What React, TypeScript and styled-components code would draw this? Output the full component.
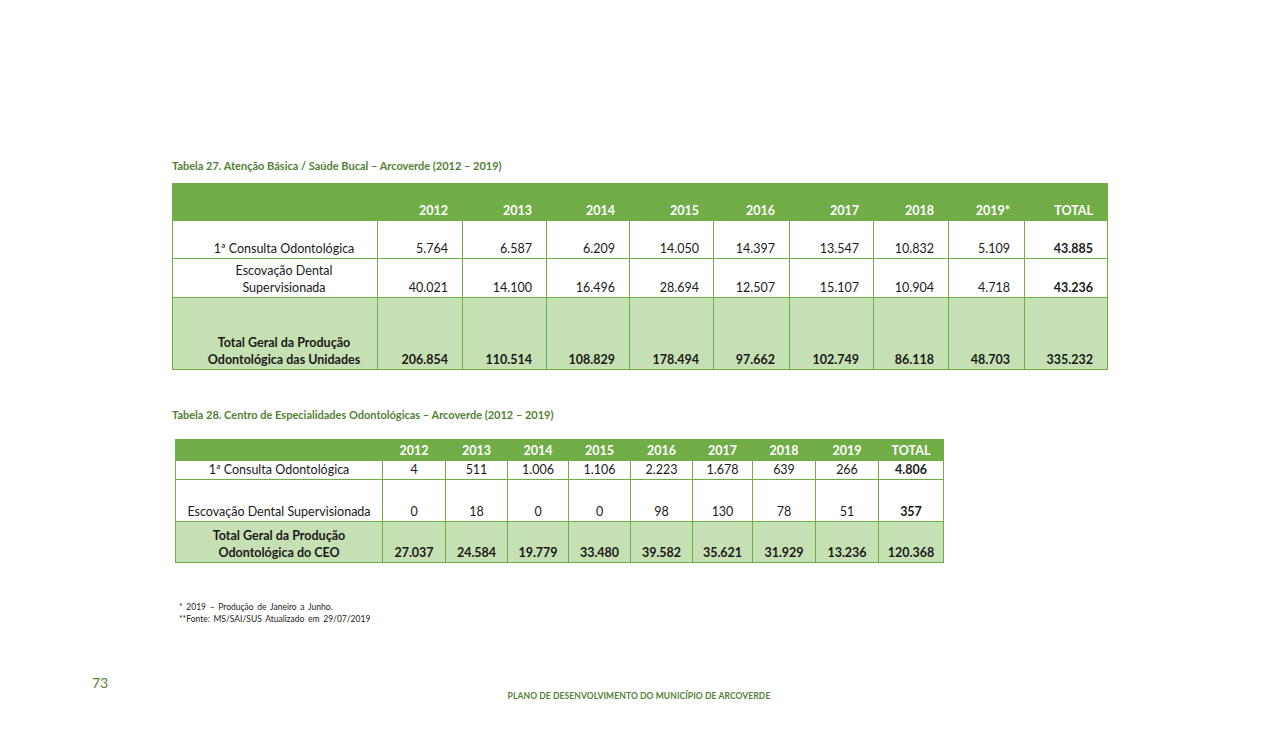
import styled, { createGlobalStyle } from "styled-components";

const GlobalStyle = createGlobalStyle`
    html, body {
        margin: 0;
        padding: 0;
        background: #ffffff;
    }

    body {
        font-family: Lato, "Open Sans", "Liberation Sans", sans-serif;
        color: #1a1a1a;
    }
`;

const Page = styled.div`
    position: relative;
    width: 1278px;
    height: 737px;
    box-sizing: border-box;
    padding: 158px 0 0 172px;
    display: flex;
    flex-direction: column;
    overflow: hidden;
`;

const Caption = styled.div<{ $gap: number }>`
    font-size: 11px;
    font-weight: 700;
    color: #538135;
    line-height: 15px;
    margin-bottom: ${(p) => p.$gap}px;
`;

const Table = styled.table<{ $offset?: number }>`
    border-collapse: collapse;
    table-layout: fixed;
    margin-left: ${(p) => p.$offset ?? 0}px;
    font-size: 12.5px;
`;

const HeadCell = styled.th<{ $align: "right" | "center"; $pad: number }>`
    background: #70ad47;
    color: #ffffff;
    font-weight: 700;
    text-align: ${(p) => p.$align};
    vertical-align: bottom;
    padding: 0 ${(p) => p.$pad}px 1px ${(p) => p.$pad}px;
    border: 1px solid #70ad47;
    line-height: 16px;
`;

const Cell = styled.td<{
    $align: "right" | "center";
    $pad: number;
    $total?: boolean;
    $bold?: boolean;
    $middle?: boolean;
}>`
    background: ${(p) => (p.$total ? "#c5e0b3" : "#ffffff")};
    font-weight: ${(p) => (p.$total || p.$bold ? 700 : 400)};
    text-align: ${(p) => p.$align};
    vertical-align: ${(p) => (p.$middle ? "middle" : "bottom")};
    padding: 0 ${(p) => p.$pad}px 1px ${(p) => p.$pad}px;
    border: 1px solid #70ad47;
    line-height: 17px;
    white-space: nowrap;
`;

const LabelCell = styled(Cell)<{ $shift?: number }>`
    text-align: center;
    white-space: normal;
    padding: 0 2px 1px ${(p) => 2 + (p.$shift ?? 0)}px;
`;

const Row = styled.tr<{ $h: number }>`
    height: ${(p) => p.$h}px;
`;

const Notes = styled.div`
    margin: 38px 0 0 7px;
    font-size: 8.5px;
    line-height: 12px;
    color: #222222;
    word-spacing: 1.5px;
`;

const PageNumber = styled.div`
    position: absolute;
    left: 92px;
    top: 674px;
    font-size: 14px;
    color: #538135;
`;

const Footer = styled.div`
    position: absolute;
    left: 0;
    right: 0;
    top: 691px;
    text-align: center;
    font-size: 8.5px;
    font-weight: 700;
    color: #538135;
    letter-spacing: 0.1px;
`;

const years1 = ["2012", "2013", "2014", "2015", "2016", "2017", "2018", "2019*"];
const widths1 = [205, 85, 84, 83, 84, 76, 84, 75, 76, 83];

const rows1 = [
    {
        label: ["1ª Consulta Odontológica"],
        values: ["5.764", "6.587", "6.209", "14.050", "14.397", "13.547", "10.832", "5.109"],
        total: "43.885",
        h: 38,
    },
    {
        label: ["Escovação Dental", "Supervisionada"],
        values: ["40.021", "14.100", "16.496", "28.694", "12.507", "15.107", "10.904", "4.718"],
        total: "43.236",
        h: 39,
    },
];

const total1 = ["206.854", "110.514", "108.829", "178.494", "97.662", "102.749", "86.118", "48.703", "335.232"];

const years2 = ["2012", "2013", "2014", "2015", "2016", "2017", "2018", "2019"];
const widths2 = [207, 63, 62, 61, 62, 62, 60, 63, 63, 65];

const total2 = ["27.037", "24.584", "19.779", "33.480", "39.582", "35.621", "31.929", "13.236", "120.368"];

const App = () => {
    return (
        <>
            <GlobalStyle />
            <Page>
                <Caption $gap={10}>
                    Tabela 27. Atenção Básica / Saúde Bucal – Arcoverde (2012 – 2019)
                </Caption>
                <Table style={{ width: 935 }}>
                    <colgroup>
                        {widths1.map((w, i) => (
                            <col key={i} style={{ width: w }} />
                        ))}
                    </colgroup>
                    <tbody>
                        <Row $h={37}>
                            <HeadCell $align="right" $pad={14} />
                            {years1.map((y) => (
                                <HeadCell key={y} $align="right" $pad={14}>
                                    {y}
                                </HeadCell>
                            ))}
                            <HeadCell $align="right" $pad={14}>
                                TOTAL
                            </HeadCell>
                        </Row>
                        {rows1.map((r) => (
                            <Row key={r.label[0]} $h={r.h}>
                                <LabelCell $align="center" $pad={2} $shift={18}>
                                    {r.label.map((line, i) => (
                                        <div key={i}>{line}</div>
                                    ))}
                                </LabelCell>
                                {r.values.map((v, i) => (
                                    <Cell key={i} $align="right" $pad={14}>
                                        {v}
                                    </Cell>
                                ))}
                                <Cell $align="right" $pad={14} $bold>
                                    {r.total}
                                </Cell>
                            </Row>
                        ))}
                        <Row $h={72}>
                            <LabelCell $align="center" $pad={2} $shift={18} $total>
                                Total Geral da Produção
                                <br />
                                Odontológica das Unidades
                            </LabelCell>
                            {total1.map((v, i) => (
                                <Cell key={i} $align="right" $pad={14} $total>
                                    {v}
                                </Cell>
                            ))}
                        </Row>
                    </tbody>
                </Table>

                <Caption $gap={17} style={{ marginTop: 37 }}>
                    Tabela 28. Centro de Especialidades Odontológicas – Arcoverde (2012 – 2019)
                </Caption>
                <Table $offset={3} style={{ width: 768 }}>
                    <colgroup>
                        {widths2.map((w, i) => (
                            <col key={i} style={{ width: w }} />
                        ))}
                    </colgroup>
                    <tbody>
                        <Row $h={21}>
                            <HeadCell $align="center" $pad={2} />
                            {years2.map((y) => (
                                <HeadCell key={y} $align="center" $pad={2}>
                                    {y}
                                </HeadCell>
                            ))}
                            <HeadCell $align="center" $pad={2}>
                                TOTAL
                            </HeadCell>
                        </Row>
                        <Row $h={19}>
                            <LabelCell $align="center" $pad={2} $middle>
                                1ª Consulta Odontológica
                            </LabelCell>
                            {["4", "511", "1.006", "1.106", "2.223", "1.678", "639", "266"].map((v, i) => (
                                <Cell key={i} $align="center" $pad={2} $middle>
                                    {v}
                                </Cell>
                            ))}
                            <Cell $align="center" $pad={2} $bold $middle>
                                4.806
                            </Cell>
                        </Row>
                        <Row $h={42}>
                            <LabelCell $align="center" $pad={2} style={{ whiteSpace: "nowrap" }}>
                                Escovação Dental Supervisionada
                            </LabelCell>
                            {["0", "18", "0", "0", "98", "130", "78", "51"].map((v, i) => (
                                <Cell key={i} $align="center" $pad={2}>
                                    {v}
                                </Cell>
                            ))}
                            <Cell $align="center" $pad={2} $bold>
                                357
                            </Cell>
                        </Row>
                        <Row $h={41}>
                            <LabelCell $align="center" $pad={2} $total>
                                Total Geral da Produção
                                <br />
                                Odontológica do CEO
                            </LabelCell>
                            {total2.map((v, i) => (
                                <Cell key={i} $align="center" $pad={2} $total>
                                    {v}
                                </Cell>
                            ))}
                        </Row>
                    </tbody>
                </Table>

                <Notes>
                    * 2019 – Produção de Janeiro a Junho.
                    <br />
                    **Fonte: MS/SAI/SUS Atualizado em 29/07/2019
                </Notes>

                <PageNumber>73</PageNumber>
                <Footer>PLANO DE DESENVOLVIMENTO DO MUNICÍPIO DE ARCOVERDE</Footer>
            </Page>
        </>
    );
};

export default App;
